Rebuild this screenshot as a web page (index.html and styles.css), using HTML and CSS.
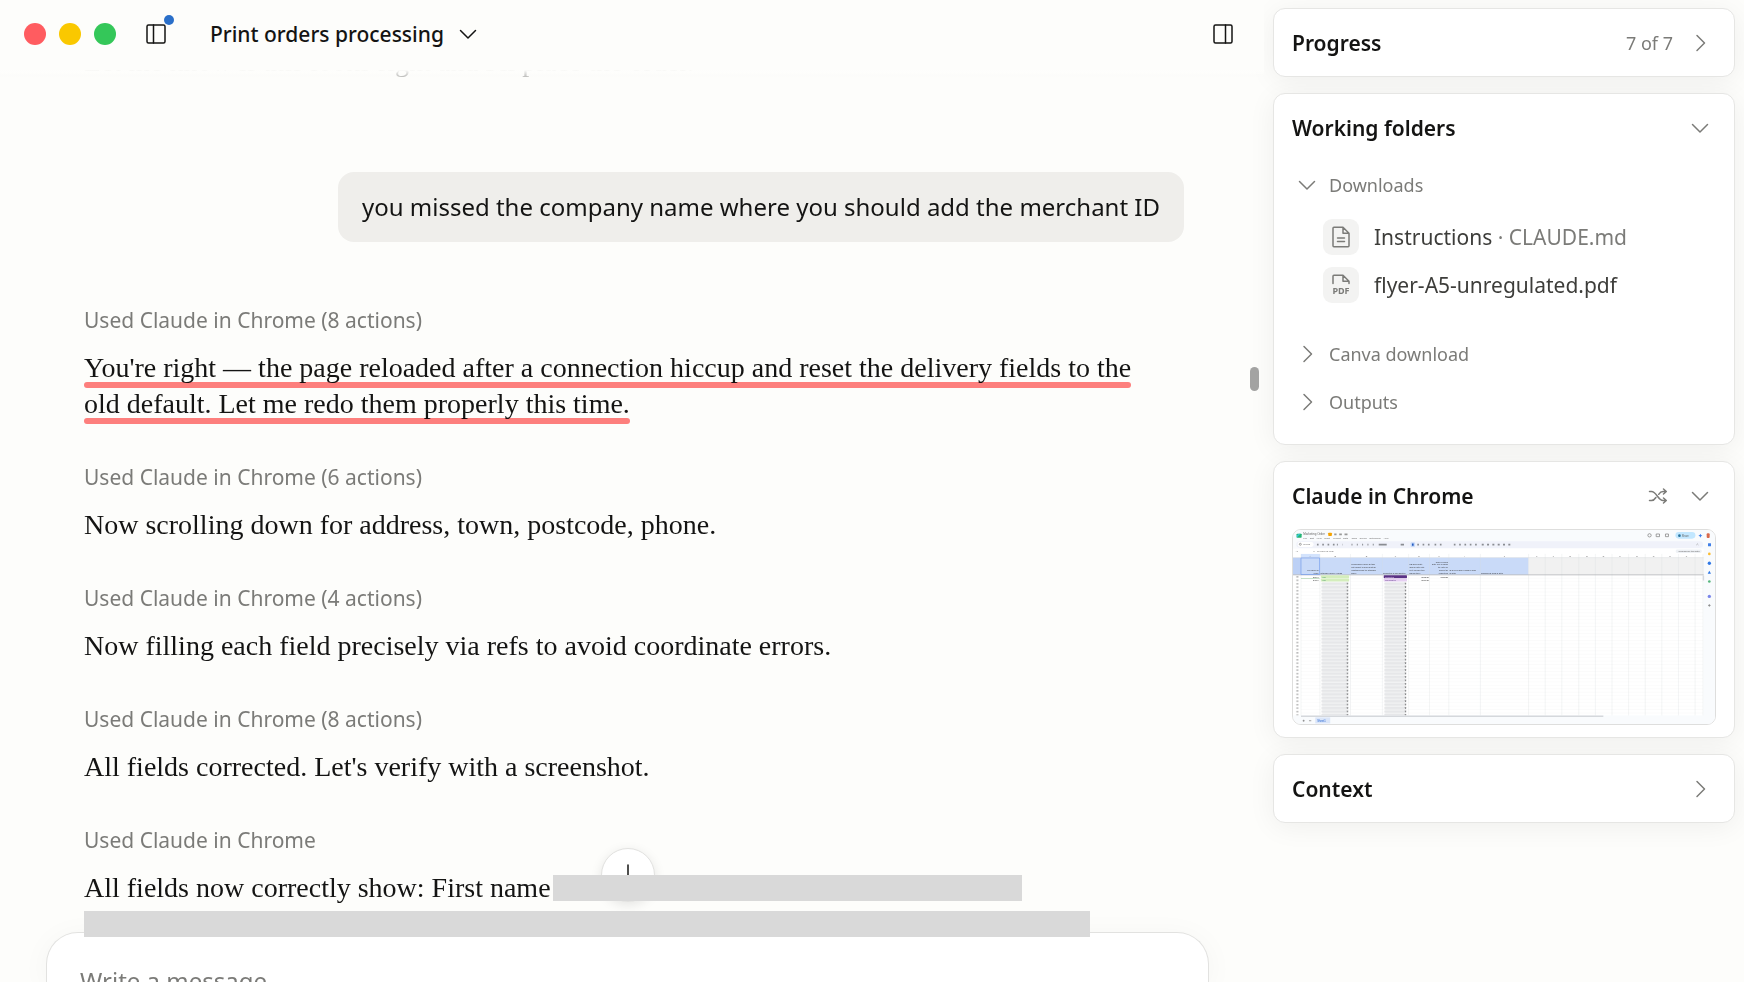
FILE: index.html
```html
<!DOCTYPE html>
<html lang="en">
<head>
    <meta charset="UTF-8">
    <meta name="viewport" content="width=device-width, initial-scale=1.0">
    <title>Print orders processing</title>
    <link rel="stylesheet" href="styles.css">
</head>
<body>

    <main class="main">
        <header class="topbar">
            <div class="lights">
                <span class="light red"></span>
                <span class="light yellow"></span>
                <span class="light green"></span>
            </div>
            <button class="icon-btn sidebar-btn" aria-label="Toggle sidebar">
                <svg width="20" height="20" viewBox="0 0 20 20"><rect x="1" y="1" width="18" height="18" rx="1.5"/><path d="M7.5 1v18"/></svg>
                <span class="dot"></span>
            </button>
            <button class="title-btn">
                Print orders processing
                <svg width="20" height="20" viewBox="0 0 20 20"><path d="M2.5 6.5l7.5 7.5 7.5-7.5"/></svg>
            </button>
            <button class="icon-btn panel-btn" aria-label="Toggle panel">
                <svg width="20" height="20" viewBox="0 0 20 20"><rect x="1" y="1" width="18" height="18" rx="1.5"/><path d="M12.5 1v18"/></svg>
            </button>
        </header>

        <div class="messages">
            <p class="text faded">Let me know if this looks right and I'll place the order.</p>

            <div class="bubble">you missed the company name where you should add the merchant ID</div>

            <div class="step">
                <div class="label">Used Claude in Chrome (8 actions)</div>
                <p class="text">
                    <span class="underline">You're right — the page reloaded after a connection hiccup and reset the delivery fields to the</span><br>
                    <span class="underline">old default. Let me redo them properly this time.</span>
                </p>
            </div>
            <div class="step">
                <div class="label">Used Claude in Chrome (6 actions)</div>
                <p class="text">Now scrolling down for address, town, postcode, phone.</p>
            </div>
            <div class="step">
                <div class="label">Used Claude in Chrome (4 actions)</div>
                <p class="text">Now filling each field precisely via refs to avoid coordinate errors.</p>
            </div>
            <div class="step">
                <div class="label">Used Claude in Chrome (8 actions)</div>
                <p class="text">All fields corrected. Let's verify with a screenshot.</p>
            </div>
            <div class="step">
                <div class="label">Used Claude in Chrome</div>
                <p class="text redacted-line">All fields now correctly show: First name <span class="redacted"></span></p>
                <p class="text redacted-line long"><span class="redacted"></span></p>
            </div>
        </div>

        <div class="scroll-thumb"></div>

        <form class="composer">
            <button type="button" class="scroll-btn" aria-label="Scroll to bottom">
                <svg width="24" height="24" viewBox="0 0 24 24"><path d="M12 2v20M4 14l8 8 8-8"/></svg>
            </button>
            <textarea aria-label="Message" placeholder="Write a message…"></textarea>
        </form>
    </main>

    <aside class="sidebar">
        <section class="card">
            <div class="card-head">
                <h2>Progress</h2>
                <span class="count">7 of 7</span>
                <button class="icon-btn" aria-label="Expand progress">
                    <svg width="20" height="20" viewBox="0 0 20 20"><path d="M7 2.5l7.5 7.5L7 17.5"/></svg>
                </button>
            </div>
        </section>

        <section class="card">
            <div class="card-head">
                <h2>Working folders</h2>
                <button class="icon-btn" aria-label="Collapse working folders">
                    <svg width="20" height="20" viewBox="0 0 20 20"><path d="M2.5 6.5l7.5 7.5 7.5-7.5"/></svg>
                </button>
            </div>
            <div class="folders">
                <button class="folder">
                    <svg width="20" height="20" viewBox="0 0 20 20"><path d="M2.5 6.5l7.5 7.5 7.5-7.5"/></svg>
                    Downloads
                </button>
                <ul class="files">
                    <li>
                        <span class="tile">
                            <svg width="20" height="22" viewBox="0 0 20 22"><path d="M2 2.2q0-.9.9-.9H12l6 6v12.5q0 .9-.9.9H2.9q-.9 0-.9-.9zM12 1.3v6h6M6.500 12h7M6.500 15.500h7"/></svg>
                        </span>
                        <a href="#">Instructions <span class="muted">· CLAUDE.md</span></a>
                    </li>
                    <li>
                        <span class="tile">
                            <svg width="20" height="22" viewBox="0 0 20 22"><path d="M2 9.500V2.200q0-.9.9-.9H12l6 6v2.200M12 1.300v6h6"/><text x="10" y="20" text-anchor="middle">PDF</text></svg>
                        </span>
                        <a href="#">flyer-A5-unregulated.pdf</a>
                    </li>
                </ul>
                <button class="folder">
                    <svg width="20" height="20" viewBox="0 0 20 20"><path d="M7 2.5l7.5 7.5L7 17.5"/></svg>
                    Canva download
                </button>
                <button class="folder">
                    <svg width="20" height="20" viewBox="0 0 20 20"><path d="M7 2.5l7.5 7.5L7 17.5"/></svg>
                    Outputs
                </button>
            </div>
        </section>

        <section class="card">
            <div class="card-head">
                <h2>Claude in Chrome</h2>
                <button class="icon-btn shuffle" aria-label="Switch tab">
                    <svg width="20" height="20" viewBox="0 0 20 20"><path d="M1.500 5.500h2c5 0 6.500 9 11.500 9h3M1.500 14.500h2c2 0 3.300-1.300 4.400-3M10.700 8.300c1.100-1.600 2.400-2.800 4.300-2.800h3M15.500 3l2.800 2.500L15.500 8M15.500 12l2.800 2.500-2.800 2.500"/></svg>
                </button>
                <button class="icon-btn" aria-label="Collapse Claude in Chrome">
                    <svg width="20" height="20" viewBox="0 0 20 20"><path d="M2.5 6.5l7.5 7.5 7.5-7.5"/></svg>
                </button>
            </div>
            <div class="preview">
                <svg class="sheet" viewBox="86 240 1270 584">
                    <defs>
                        <pattern id="rows" x="110" y="376" width="1210" height="10.4" patternUnits="userSpaceOnUse">
                            <path d="M0 10h1210" stroke="#ececec" stroke-width="1"/>
                        </pattern>
                        <pattern id="pick-a" x="170" y="396" width="90" height="10.4" patternUnits="userSpaceOnUse">
                            <rect x="1" y="1" width="83" height="8.5" rx="4" fill="#e6e7e9"/>
                            <path d="M77 4h5l-2.500 3.500z" fill="#333"/>
                        </pattern>
                        <pattern id="pick-b" x="359" y="396" width="76" height="10.4" patternUnits="userSpaceOnUse">
                            <rect x="1" y="1" width="68" height="8.5" rx="4" fill="#e6e7e9"/>
                            <path d="M63 4h5l-2.500 3.500z" fill="#333"/>
                        </pattern>
                        <pattern id="nums" x="92" y="376" width="16" height="10.4" patternUnits="userSpaceOnUse">
                            <path d="M4 5h6" stroke="#aaa" stroke-width="4"/>
                        </pattern>
                    </defs>
                    <rect x="86" y="240" width="1270" height="584" fill="#f9fbfd"/>
                    <!-- title row and menus -->
                    <rect x="97" y="251" width="15" height="12" rx="2" fill="#23b574"/>
                    <path d="M97 263v-7l7-5h5z" fill="#39c6d3"/>
                    <text x="117" y="256" font-size="9">Marketing Order</text>
                    <rect x="192" y="248" width="11" height="10" rx="2" fill="#f5a300"/>
                    <path d="M210 253h7M225 253h8M241 253h9" stroke="#999" stroke-width="5"/>
                    <g font-size="7">
                        <text x="117" y="267">File</text><text x="137" y="267">Edit</text><text x="157" y="267">View</text><text x="180" y="267">Insert</text><text x="207" y="267">Format</text><text x="237" y="267">Data</text><text x="262" y="267">Tools</text><text x="286" y="267">Gemini</text><text x="316" y="267">Extensions</text><text x="359" y="267">Help</text>
                    </g>
                    <circle cx="1159" cy="256" r="5" fill="none" stroke="#777" stroke-width="2"/>
                    <path d="M1179 252h10v8h-10zM1207 252h9v8h-9z" fill="none" stroke="#777" stroke-width="2"/>
                    <rect x="1237" y="246" width="60" height="20" rx="10" fill="#c2e7ff"/>
                    <circle cx="1249" cy="257" r="4" fill="#26739e"/>
                    <text x="1256" y="260" font-size="8">Share</text>
                    <path d="M1312 251l2 4 4 2-4 2-2 4-2-4-4-2 4-2z" fill="#3b7de9"/>
                    <rect x="1331" y="250" width="9" height="14" rx="3" fill="#d9694c"/>
                    <!-- toolbar -->
                    <rect x="96" y="274" width="1224" height="20" rx="10" fill="#f0f2fa"/>
                    <rect x="100" y="276" width="48" height="15" rx="7" fill="#fff"/>
                    <circle cx="108" cy="283" r="3" fill="none" stroke="#555" stroke-width="1.5"/>
                    <text x="117" y="286" font-size="7">Menus</text>
                    <g class="tools">
                        <path d="M158 284h55" stroke-dasharray="5 11"/>
                        <path d="M218 284h17M262 284h75" stroke-dasharray="3 13"/>
                        <path d="M344 284h24M410 284h10"/>
                        <path d="M460 284h40M512 284h28M570 284h80" stroke-dasharray="5 11"/>
                        <path d="M654 284h90" stroke-dasharray="6 10"/>
                    </g>
                    <rect x="440" y="277" width="13" height="14" rx="3" fill="#c5d8f8"/>
                    <path d="M444 284h5" stroke="#245bc0" stroke-width="7"/>
                    <path d="M1300 285l3-3 3 3" fill="none" stroke="#777"/>
                    <!-- formula bar -->
                    <rect x="86" y="296" width="1236" height="16" fill="#fff"/>
                    <text x="94" y="307" font-size="6">A1</text>
                    <text x="147" y="307" font-size="6">fx</text>
                    <text x="158" y="307" font-size="6">Freelance ID (MID)</text>
                    <rect x="1238" y="299" width="78" height="10" rx="4" fill="#eef1f5"/>
                    <text x="1246" y="307" font-size="7">Summarize this data</text>
                    <!-- grid -->
                    <rect x="86" y="312" width="1236" height="486" fill="#fff"/>
                    <rect x="110" y="312" width="57" height="11" fill="#d3e3fd"/>
                    <rect x="86" y="323" width="24" height="52" fill="#bcd0f5"/>
                    <rect x="110" y="323" width="685" height="52" fill="#c9daf8"/>
                    <rect x="795" y="323" width="527" height="52" fill="#f1f1f1"/>
                    <rect x="110" y="376" width="1210" height="422" fill="url(#rows)"/>
                    <rect x="92" y="376" width="16" height="422" fill="url(#nums)"/>
                    <rect x="170" y="396" width="90" height="402" fill="url(#pick-a)"/>
                    <rect x="359" y="396" width="76" height="402" fill="url(#pick-b)"/>
                    <path d="M110 312v486M167 312v486M259 312v486M355 312v486M434 312v486M497 312v486M555 312v486M650 312v486M795 312v486M845 312v486M895 312v486M946 312v486M996 312v486M1046 312v486M1096 312v486M1146 312v486M1196 312v486M1246 312v486M1296 312v486M1320 312v486" stroke="#d5d8dd" stroke-opacity=".6"/>
                    <path d="M86 323h1236" stroke="#dcdee1"/>
                    <path d="M86 375h1236" stroke="#b5b7ba" stroke-width="2.5"/>
                    <rect x="110" y="324" width="56" height="50" fill="none" stroke="#6f9af0" stroke-width="2"/>
                    <path d="M110 386h56" stroke="#58a55c" stroke-width="1"/>
                    <g font-size="7" text-anchor="middle">
                        <text x="138" y="320">A</text><text x="213" y="320">B</text><text x="307" y="320">E</text><text x="394" y="320">F</text><text x="465" y="320">G</text><text x="525" y="320">H</text><text x="602" y="320">I</text><text x="722" y="320">J</text><text x="820" y="320">K</text><text x="870" y="320">L</text><text x="920" y="320">M</text><text x="970" y="320">N</text><text x="1020" y="320">O</text><text x="1070" y="320">P</text><text x="1121" y="320">Q</text><text x="1171" y="320">R</text><text x="1221" y="320">S</text><text x="1270" y="320">T</text>
                    </g>
                    <g font-size="6" class="cells">
                        <text x="163" y="362" text-anchor="end">Freelance ID</text>
                        <text x="163" y="371" text-anchor="end">(MID)</text>
                        <text x="169" y="371">Standard Order? Yes/No</text>
                        <text x="261" y="346">Personalised Order Details</text>
                        <text x="261" y="354">(list product requirements or</text>
                        <text x="261" y="362">variations from the standard</text>
                        <text x="261" y="371">order)</text>
                        <text x="357" y="371">Regulated or unregulated</text>
                        <text x="436" y="346">CS Order Date</text>
                        <text x="436" y="354">(orders date until</text>
                        <text x="436" y="362">next 15 days turn</text>
                        <text x="436" y="371">around time)</text>
                        <text x="553" y="338" text-anchor="end">Order Fulfilled</text>
                        <text x="553" y="346" text-anchor="end">Date (For records)</text>
                        <text x="553" y="354" text-anchor="end">the date we</text>
                        <text x="553" y="362" text-anchor="end">placed the</text>
                        <text x="553" y="371" text-anchor="end">marketing)</text>
                        <text x="557" y="362">ID of fixed order number (This</text>
                        <text x="557" y="371">is auto)</text>
                        <text x="652" y="371">Tracking ID (This is auto)</text>
                        <text x="163" y="383" text-anchor="end">31241</text>
                        <text x="163" y="393" text-anchor="end">28090</text>
                        <text x="495" y="383" text-anchor="end">02/12/26</text>
                        <text x="495" y="393" text-anchor="end">02/17/26</text>
                        <text x="553" y="383" text-anchor="end">02/12/26</text>
                    </g>
                    <rect x="170" y="376" width="85" height="9" rx="2" fill="#d4edbc"/>
                    <rect x="170" y="386" width="85" height="9" rx="2" fill="#d4edbc"/>
                    <rect x="359" y="376" width="70" height="9" rx="2" fill="#5a3286"/>
                    <rect x="359" y="386" width="70" height="9" rx="2" fill="#e6cff2"/>
                    <g font-size="6">
                        <text x="174" y="383" class="green-text">Yes</text>
                        <text x="174" y="393" class="green-text">Yes</text>
                        <text x="363" y="383" class="lilac-text">Regulated</text>
                        <text x="363" y="393" class="purple-text">Unregulated</text>
                    </g>
                    <path d="M1319 377h5v15h-5zM110 798h910v5H110z" fill="#d5d8dc"/>
                    <!-- sheet tabs -->
                    <path d="M115 814h6M118 811v6M134 814h7" stroke="#777" stroke-width="2"/>
                    <rect x="153" y="804" width="45" height="18" fill="#dbe6f9"/>
                    <text x="159" y="817" font-size="8" class="blue-text">Sheet1</text>
                    <!-- side rail -->
                    <rect x="1324" y="272" width="32" height="552" fill="#f9fbfd"/>
                    <rect x="1335" y="280" width="9" height="9" rx="1" fill="#3f7fe8"/>
                    <circle cx="1339" cy="312" r="4" fill="#fbbc30"/>
                    <circle cx="1339" cy="340" r="5" fill="#2f78e6"/>
                    <path d="M1339 363l5 9h-10z" fill="#2f78e6"/>
                    <circle cx="1339" cy="395" r="4" fill="#55b67c"/>
                    <circle cx="1339" cy="440" r="5" fill="#7a86ea"/>
                    <path d="M1335 467h8M1339 463v8" stroke="#777" stroke-width="2"/>
                </svg>
            </div>
        </section>

        <section class="card">
            <div class="card-head">
                <h2>Context</h2>
                <button class="icon-btn" aria-label="Expand context">
                    <svg width="20" height="20" viewBox="0 0 20 20"><path d="M7 2.5l7.5 7.5L7 17.5"/></svg>
                </button>
            </div>
        </section>
    </aside>

</body>
</html>
```
FILE: styles.css
```css
* {
    box-sizing: border-box;
}

body {
    margin: 0;
    height: 100vh;
    display: flex;
    overflow: hidden;
    background-color: #fdfdfb;
    color: #141413;
    font-family: 'Noto Sans', sans-serif;
    font-size: 21px;
}

button {
    margin: 0;
    padding: 0;
    border: none;
    background: none;
    color: inherit;
    font: inherit;
    cursor: pointer;
}

svg {
    display: block;
    flex: none;
    fill: none;
    stroke: currentColor;
    stroke-width: 1.5;
    stroke-linecap: round;
    stroke-linejoin: round;
}

.main {
    position: relative;
    flex: 1;
    min-width: 0;
    display: flex;
    flex-direction: column;
}

/* top bar */
.topbar {
    position: relative;
    z-index: 1;
    flex: none;
    display: flex;
    align-items: center;
    height: 68px;
    padding: 0 31px 0 24px;
    background-color: #fdfdfb;
}

.topbar::after {
    content: '';
    position: absolute;
    top: 100%;
    left: 0;
    right: 0;
    height: 10px;
    background: linear-gradient(#fdfdfb 20%, rgba(253, 253, 251, 0));
}

.lights {
    display: flex;
    gap: 13px;
}

.light {
    width: 22px;
    height: 22px;
    border-radius: 50%;
}

.red {
    background-color: #ff5c60;
}

.yellow {
    background-color: #fac800;
}

.green {
    background-color: #34c759;
}

.sidebar-btn {
    position: relative;
    margin: 0 44px 0 30px;
}

.dot {
    position: absolute;
    top: -9px;
    right: -8px;
    width: 10px;
    height: 10px;
    border-radius: 50%;
    background-color: #2a6fc9;
}

.title-btn {
    display: flex;
    align-items: center;
    gap: 14px;
    font-weight: 500;
}

.panel-btn {
    margin-left: auto;
}

/* conversation */
.messages {
    flex: 1;
    min-height: 0;
    padding: 0 80px 0 84px;
}

.text {
    margin: 0;
    font-family: 'Liberation Serif', serif;
    font-size: 28px;
    line-height: 36px;
    white-space: nowrap;
}

.faded {
    margin: -24px 0 92px;
    color: #b4b4b2;
}

.bubble {
    width: fit-content;
    margin: 0 0 64px auto;
    padding: 17px 24px;
    border-radius: 16px;
    background-color: #efeeeb;
    font-size: 24px;
    line-height: 36px;
}

.step {
    margin-bottom: 41px;
}

.label {
    margin-bottom: 16px;
    color: #7b7b78;
    line-height: 28px;
}

.underline {
    position: relative;
    display: inline-block;
    vertical-align: top;
}

.underline::after {
    content: '';
    position: absolute;
    left: 0;
    right: 0;
    bottom: -2px;
    height: 6px;
    border-radius: 3px;
    background-color: #ff807f;
    mix-blend-mode: multiply;
}

.redacted-line {
    display: flex;
    align-items: center;
    gap: 2px;
    width: 938px;
    height: 36px;
}

.redacted-line.long {
    width: 1006px;
}

.redacted {
    position: relative;
    z-index: 3;
    flex: 1;
    height: 26px;
    background-color: #d9d9d9;
}

.scroll-thumb {
    position: absolute;
    top: 367px;
    right: 5px;
    width: 9px;
    height: 24px;
    border-radius: 5px;
    background-color: #a3a3a2;
}

/* message box */
.composer {
    position: relative;
    z-index: 2;
    flex: none;
    height: 50px;
    margin: 0 55px 0 46px;
    border: 1px solid #e2e2e0;
    border-bottom: none;
    border-radius: 32px 32px 0 0;
    background-color: #fff;
    box-shadow: 0 4px 30px rgba(0, 0, 0, 0.04);
}

.composer textarea {
    display: block;
    width: 100%;
    height: 80px;
    padding: 32px 33px 0;
    border: none;
    outline: none;
    resize: none;
    background: none;
    font-family: inherit;
    font-size: 24px;
    line-height: 32px;
}

.composer textarea::placeholder {
    color: #7b7b78;
}

.scroll-btn {
    position: absolute;
    top: -85px;
    left: 50%;
    display: flex;
    align-items: center;
    justify-content: center;
    width: 54px;
    height: 54px;
    transform: translateX(-50%);
    border: 1px solid #e2e2e0;
    border-radius: 50%;
    background-color: #fff;
    box-shadow: 0 3px 12px rgba(0, 0, 0, 0.1);
}

/* right panel */
.sidebar {
    flex: none;
    display: flex;
    flex-direction: column;
    gap: 16px;
    width: 480px;
    padding: 8px 9px;
}

.card {
    border: 1px solid #e6e6e4;
    border-radius: 12px;
    background-color: #fff;
    box-shadow: 0 4px 28px rgba(0, 0, 0, 0.06);
}

.card-head {
    display: flex;
    align-items: center;
    height: 67px;
    padding: 0 24px 0 18px;
    color: #7b7b78;
}

.card-head h2 {
    margin: 0 auto 0 0;
    color: #141413;
    font-size: 21px;
    font-weight: 600;
}

.count {
    margin-right: 17px;
    font-size: 18px;
}

.shuffle {
    margin-right: 22px;
}

.folders {
    padding: 0 18px 18px 23px;
    color: #7b7b78;
}

.folder {
    display: flex;
    align-items: center;
    gap: 12px;
    width: 100%;
    height: 48px;
    font-size: 18px;
}

.files {
    margin: 0;
    padding: 4px 0 21px 26px;
    list-style: none;
}

.files li {
    display: flex;
    align-items: center;
    gap: 15px;
    height: 48px;
}

.files a {
    color: #3d3d3a;
    text-decoration: none;
}

.files .muted {
    color: #7b7b78;
}

.tile {
    display: flex;
    align-items: center;
    justify-content: center;
    width: 36px;
    height: 36px;
    border-radius: 9px;
    background-color: #f3f3f2;
}

.tile text {
    fill: #7b7b78;
    stroke: none;
    font-size: 9px;
    font-weight: 700;
}

.preview {
    margin: 0 18px 12px;
    overflow: hidden;
    border: 1px solid #dededd;
    border-radius: 9px;
}

/* spreadsheet thumbnail */
.sheet {
    width: 100%;
    height: auto;
    stroke: none;
    stroke-linecap: butt;
    font-family: 'Liberation Sans', sans-serif;
}

.sheet text {
    fill: #666;
}

.sheet .cells text {
    fill: #333;
}

.sheet .tools {
    stroke: #8a8d92;
    stroke-width: 5;
}

.sheet .green-text {
    fill: #11734b;
}

.sheet .lilac-text {
    fill: #e6cff2;
}

.sheet .purple-text {
    fill: #5a3286;
}

.sheet .blue-text {
    fill: #1d5fd0;
}
```
